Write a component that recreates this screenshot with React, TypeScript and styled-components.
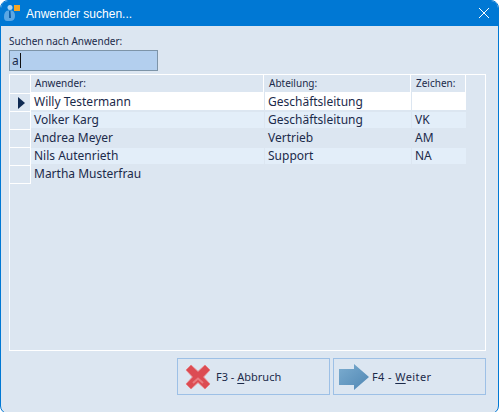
import styled, { createGlobalStyle } from "styled-components";

const USERS = [
  { name: "Willy Testermann", department: "Geschäftsleitung", sign: "" },
  { name: "Volker Karg", department: "Geschäftsleitung", sign: "VK" },
  { name: "Andrea Meyer", department: "Vertrieb", sign: "AM" },
  { name: "Nils Autenrieth", department: "Support", sign: "NA" },
  { name: "Martha Musterfrau", department: "", sign: "" },
];

const TEXT = "#1b2a4a";
const PANEL = "#dce6f1";

export default function App() {
  return (
    <Page>
      <GlobalStyle />
      <TitleBar>
        <AppIcon />
        <Title>Anwender suchen...</Title>
        <CloseIcon />
      </TitleBar>
      <Content>
        <SearchLabel>Suchen nach Anwender:</SearchLabel>
        <SearchBox>
          a<Caret />
        </SearchBox>
        <Grid>
          <HeaderRow>
            <Indicator />
            <HeaderCell>Anwender:</HeaderCell>
            <HeaderCell>Abteilung:</HeaderCell>
            <HeaderCell>Zeichen:</HeaderCell>
          </HeaderRow>
          {USERS.map((user, index) => (
            <Row key={user.name}>
              <Indicator>{index === 0 && <RowMarker />}</Indicator>
              <Cell $tone={getTone(index)}>{user.name}</Cell>
              <Cell $tone={getTone(index)}>{user.department}</Cell>
              <Cell $tone={getTone(index)}>{user.sign}</Cell>
            </Row>
          ))}
        </Grid>
        <Footer>
          <ActionButton $inset={7} $gap={5}>
            <CancelIcon />
            <span>
              F3 - <u>A</u>bbruch
            </span>
          </ActionButton>
          <ActionButton $inset={5} $gap={3}>
            <NextIcon />
            <WideLabel>
              F4 - <u>W</u>eiter
            </WideLabel>
          </ActionButton>
        </Footer>
      </Content>
    </Page>
  );
}

const getTone = (index: number) => {
  if (index === 0) return "#ffffff";
  return index % 2 === 1 ? "#e3eef9" : PANEL;
};

const AppIcon = () => (
  <svg width="20" height="20" viewBox="0 0 20 20">
    <rect x="10" y="1" width="6" height="6" fill="#f5a623" />
    <circle cx="6" cy="3.5" r="2.5" fill="#a9d4f5" />
    <path d="M0 13 Q0 7 4 6.5 L8 6.5 Q11 7.5 11 12 Q11 17 6 17 L3 17 Q0 17 0 13 Z" fill="#5ba7e4" />
    <path d="M5 7 L6.5 7 L7 14 L5 14 Z" fill="#0f5fa8" />
  </svg>
);

const CloseIcon = () => (
  <CloseSvg width="10" height="10" viewBox="0 0 10 10">
    <path d="M0 0 L10 10 M10 0 L0 10" stroke="#ffffff" strokeWidth="1" fill="none" />
  </CloseSvg>
);

const RowMarker = () => (
  <svg width="7" height="12" viewBox="0 0 7 12">
    <path d="M0 0 L7 6 L0 12 Z" fill="#0f2a52" />
  </svg>
);

const CancelIcon = () => (
  <svg width="26" height="26" viewBox="0 0 26 26">
    <path
      d="M6 1 L13 7.5 L20 1 L25 6 L18.5 13 L25 20 L20 25 L13 18.5 L6 25 L1 20 L7.5 13 L1 6 Z"
      fill="#dc4c53"
      stroke="#e68287"
      strokeWidth="1"
      strokeLinejoin="round"
    />
    <path d="M8 19 L13 14.5 L18 19" fill="none" stroke="#e97b80" strokeWidth="2" />
  </svg>
);

const NextIcon = () => (
  <svg width="30" height="26" viewBox="0 0 30 26">
    <defs>
      <linearGradient id="arrowFill" x1="0" y1="0" x2="1" y2="1">
        <stop offset="0" stopColor="#7cadd0" />
        <stop offset="1" stopColor="#4f86b3" />
      </linearGradient>
    </defs>
    <path d="M0 5 L15 5 L15 0 L30 13 L15 26 L15 21 L0 21 Z" fill="url(#arrowFill)" />
  </svg>
);

const GlobalStyle = createGlobalStyle`
  html, body {
    margin: 0;
    height: 412px;
    overflow: hidden;
    background: #ffffff;
  }
`;

const Page = styled.div`
  width: 499px;
  height: 414px;
  box-sizing: border-box;
  display: flex;
  flex-direction: column;
  overflow: hidden;
  background: ${PANEL};
  border: 1px solid #0078d4;
  border-radius: 8px;
  font-family: "Noto Sans", "Open Sans", sans-serif;
  color: ${TEXT};
`;

const TitleBar = styled.div`
  height: 25px;
  flex: none;
  display: flex;
  align-items: center;
  padding: 0 9px 0 3px;
  background: #0078d4;
`;

const Title = styled.div`
  margin-left: 2px;
  flex: 1;
  font-family: "Liberation Sans", sans-serif;
  font-size: 12px;
  color: #ffffff;
`;

const CloseSvg = styled.svg`
  display: block;
  margin-bottom: 1px;
`;

const Content = styled.div`
  flex: 1;
  display: flex;
  flex-direction: column;
  padding: 7px 12px 15px 8px;
`;

const SearchLabel = styled.div`
  height: 16px;
  font-size: 10px;
  line-height: 16px;
`;

const SearchBox = styled.div`
  width: 149px;
  height: 21px;
  box-sizing: border-box;
  margin-top: 1px;
  display: flex;
  align-items: center;
  padding-left: 2px;
  background: #b3cfee;
  border: 1px solid #7d94a8;
  font-size: 12px;
`;

const Caret = styled.span`
  display: inline-block;
  width: 1px;
  height: 15px;
  margin-left: 1px;
  background: #101010;
`;

const Grid = styled.div`
  height: 277px;
  flex: none;
  box-sizing: border-box;
  margin-top: 3px;
  border: 1px solid #ffffff;
`;

const Row = styled.div`
  display: grid;
  grid-template-columns: 20px 233px 146px 54px;
  column-gap: 1px;
  height: 18px;
`;

const HeaderRow = styled(Row)`
  height: 19px;
`;

const Indicator = styled.div`
  display: flex;
  align-items: center;
  justify-content: center;
  box-sizing: border-box;
  padding-left: 2px;
  width: 21px;
  border-right: 1px solid #ffffff;
  border-bottom: 1px solid #ffffff;
`;

const HeaderCell = styled.div`
  box-sizing: border-box;
  padding-left: 4px;
  border-right: 1px solid #ffffff;
  border-bottom: 2px solid #ffffff;
  font-size: 10px;
  line-height: 16px;
`;

const Cell = styled.div<{ $tone: string }>`
  height: 16px;
  padding-left: 3px;
  margin-bottom: 2px;
  background: ${(props) => props.$tone};
  font-size: 12px;
  line-height: 16px;
`;

const Footer = styled.div`
  display: flex;
  justify-content: flex-end;
  gap: 3px;
  margin-top: 7px;
`;

const ActionButton = styled.div<{ $inset: number; $gap: number }>`
  width: 153px;
  height: 37px;
  box-sizing: border-box;
  display: flex;
  align-items: center;
  gap: ${(props) => props.$gap}px;
  padding-left: ${(props) => props.$inset}px;
  border: 1px solid #9dc0e6;
  font-size: 11px;

  u {
    text-underline-offset: 2px;
  }
`;

const WideLabel = styled.span`
  letter-spacing: 0.4px;
`;
